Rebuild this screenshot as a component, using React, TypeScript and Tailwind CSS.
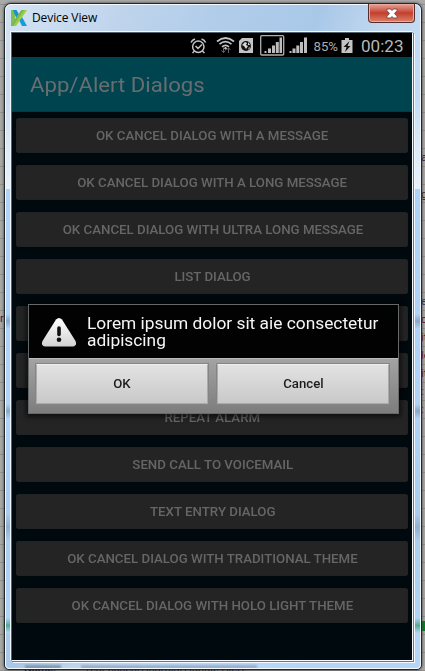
import React from "react";

const items = [
  "OK CANCEL DIALOG WITH A MESSAGE",
  "OK CANCEL DIALOG WITH A LONG MESSAGE",
  "OK CANCEL DIALOG WITH ULTRA LONG MESSAGE",
  "LIST DIALOG",
  "",
  "",
  "REPEAT ALARM",
  "SEND CALL TO VOICEMAIL",
  "TEXT ENTRY DIALOG",
  "OK CANCEL DIALOG WITH TRADITIONAL THEME",
  "OK CANCEL DIALOG WITH HOLO LIGHT THEME",
];

function Logo() {
  return (
    <svg className="h-4 w-4" viewBox="0 0 16 16">
      <path d="M0 0h4v16H0z" fill="#7fbf55" />
      <path d="M2 0h3.500L9 6l-3 4z" fill="#1593cf" />
      <path d="M8 10l3-3 5 9h-5z" fill="#159ddb" />
      <path d="M10.500 0H16L5 16H0v-1z" fill="#9fcb45" />
      <path d="M10.500 0H13L2 16H0v-1z" fill="#74b751" />
    </svg>
  );
}

function StatusIcons() {
  return (
    <svg className="h-6 w-[222px] shrink-0" viewBox="188 33 222 24">
      <g fill="none" stroke="#c4c4c4" strokeWidth="1.5">
        <circle cx="198.300" cy="46.700" r="5.700" />
        <path d="M191 42.500q1-2.500 4-3.500M205.600 42.500q-1-2.500-4-3.500M194.500 51l-2 2M202.500 51l2 2M195.500 46l2.500 2.500 4-4" />
        <path d="M217 41.500q8.500-7 17 0M219.500 44.200q6-5 12 0M222 46.800q3.500-3 7 0" strokeWidth="1.700" />
      </g>
      <circle cx="225.500" cy="48.200" r="1.200" fill="#c9c9c9" />
      <path d="M223.500 47.500v5M221.500 50.500l2 2.200 2-2.200M228.500 53v-5M226.500 50l2-2.200 2 2.200" fill="none" stroke="#666" />
      <path d="M242 38h11v15h-14V41z" fill="#c4c4c4" />
      <circle cx="246" cy="46" r="4.900" fill="#111" />
      <path d="M242 45l3-3 2 1-1 2 2 1-2 3-2-3zM248 42l2 3h-2zM249 47l1 1-2 2z" fill="#d7d7d7" />
      <rect x="260.700" y="35.700" width="23" height="19.300" rx="1" fill="none" stroke="#b0b0b0" strokeWidth="1.300" />
      <path d="M264.500 51h2v2h-2zM268 48.500h3V53h-3zM272 45.500h3V53h-3zM275.800 42h3v11h-3zM279.500 37.500h2.500V53h-2.500zM289.500 51h2v2h-2zM292.500 48.500h3V53h-3zM296.300 45.500h3V53h-3zM300 42h3v11h-3zM304 37.500h3V53h-3z" fill="#bdbdbd" />
      <text x="313.500" y="50.500" textLength="24.500" lengthAdjust="spacingAndGlyphs" fontSize="12" fontFamily="Roboto, sans-serif" fill="#adadad">85%</text>
      <path d="M345 38h4v2h3.500v13H341.500V40H345z" fill="#c4c4c4" />
      <path d="M349.500 41l-6 6h3l-1.500 5 5.500-6h-3z" fill="#111" />
      <text x="361" y="51.500" textLength="42.500" lengthAdjust="spacingAndGlyphs" fontSize="15.800" fontFamily="Roboto, sans-serif" fill="#b8b8b8">00:23</text>
    </svg>
  );
}

function AlertDialog() {
  const button =
    "flex h-[40px] w-[172px] items-center justify-center border border-[#aaa] border-t-[#eee] bg-linear-to-b from-[#e2e2e2] to-[#c9c9c9] pb-px text-[12px] font-medium text-[#1c1c1c] shadow-[0_0_0_1px_#858585]";
  return (
    <div className="absolute top-[271px] left-4 h-[110px] w-[371px] border border-[#656969] bg-[#838383] font-[Roboto,sans-serif] shadow-[0_1px_5px_2px_#0009]">
      <div className="flex h-[53px] items-start bg-[#020202] pt-2.5 pl-3">
        <svg className="mt-[3px] h-[29px] w-[36px] shrink-0" viewBox="0 0 36 29">
          <defs>
            <linearGradient id="warning" x2="0" y2="1">
              <stop stopColor="#fff" />
              <stop offset="1" stopColor="#d2d2d2" />
            </linearGradient>
          </defs>
          <path d="M15 1.600Q18-1.500 21 1.600L34.500 23q2 5-3 5.500h-27q-5-.5-3-5.500z" fill="url(#warning)" />
          <path d="M18 10v6.500" stroke="#111" strokeWidth="3.600" strokeLinecap="round" />
          <circle cx="18" cy="21.800" r="2.300" fill="#111" />
        </svg>
        <p className="ml-[10px] origin-left scale-x-[1.083] text-[16px] leading-[17px] whitespace-nowrap text-[#f5f5f5]">
          Lorem ipsum dolor sit aie consectetur<br />adipiscing
        </p>
      </div>
      <div className="flex h-[55px] gap-[9px] border-t border-[#bbb] bg-linear-to-b from-[#a3a3a3] to-[#7d7d7d] px-[7px] pt-[5px]">
        <button className={button}><span className="scale-x-[1.1]">OK</span></button>
        <button className={button}><span className="scale-x-[1.1]">Cancel</span></button>
      </div>
    </div>
  );
}

export default function App() {
  return (
    <div className="relative h-[671px] w-[425px] overflow-hidden bg-[#a9a8a5] bg-[repeating-linear-gradient(to_bottom,transparent_0px,transparent_4px,#929190_4px,#929190_5px,transparent_5px,transparent_18px)] px-1 pt-[3px] font-[Roboto,sans-serif]">
      <div className="absolute top-0 left-0 h-[3px] w-full bg-[#aaa]" />
      <span className="absolute top-[311px] left-0 h-4 w-1 overflow-hidden text-[11px] text-[#302052]">r</span>
      <span className="absolute top-[150px] left-[421px] text-[11px] text-[#302052]">a</span>
      <span className="absolute top-[187px] left-[421px] text-[11px] text-[#40291d]">g</span>
      <div className="absolute top-[293px] left-[421px] h-[126px] w-1 overflow-hidden text-[11px] leading-[18px] text-[#67103c]">
        <span className="text-[#1c3f75]">e</span><br />c<br />it<br />le<br />it<br />:<br />:
      </div>
      <div className="absolute top-[621px] left-[421px] h-[10px] w-1 bg-[#087f22]" />
      <div className="absolute top-[662px] left-[24px] flex text-[11px] leading-[14px] whitespace-nowrap text-[#171b35]">
        <b className="w-[60px]">Name:</b>
        <span>Test cases/Android/Handle Alert</span>
      </div>
      <div className="relative h-[667px] w-[418px] overflow-hidden rounded-t-[7px] rounded-b-[5px] border border-[#20272d] bg-[#b4d5f7] bg-[linear-gradient(115deg,#d4e3f3_0px,#bfd4ec_110px,#b2cdea_190px,#abc9e9_270px,#a9c8e8_290px,#c1d7ef_350px,#c3dcf6_410px,#b4d5f7_560px)] shadow-[0_0_3px_#333]">
        <div className="absolute top-[92px] left-0 h-[93px] w-full bg-linear-to-b from-[#e4eef900] via-[#dce9f7] to-[#e6f1fc]" />
        <div className="absolute top-[185px] left-0 h-[430px] w-full bg-[linear-gradient(to_bottom,#b0d3f7_0px,#b0d3f7_125px,#8ba8c5_132px,#b0d3f7_140px,#b0d3f7_215px,#8ba8c5_222px,#b0d3f7_230px,#aaccef_325px,#93afcc_338px,#acceef_352px,#b0d3f7_430px)]" />
        <div className="absolute top-[614px] left-0 h-[15px] w-full bg-linear-to-b from-[#b0d3f7] via-[#53aa8e] to-[#b4d5f7]" />
        <div className="absolute top-[661px] left-[20px] flex h-1 w-[232px] gap-5 blur-[1px]">
          <div className="w-9 bg-[#8298af]" />
          <div className="flex-1 bg-[#95afcc]" />
        </div>
        <div className="pointer-events-none absolute inset-0 rounded-t-[6px] rounded-b-[4px] border border-[#f4f9ff]" />
        <div className="relative flex h-7 items-start pl-1.5">
          <div className="mt-1.5"><Logo /></div>
          <span className="mt-[5px] ml-[5px] font-['Open_Sans',sans-serif] text-[12px] leading-[17px] tracking-[-0.100px] text-black">Device View</span>
          <button className="mr-[6px] ml-auto flex h-[19px] w-[47px] items-center justify-center rounded-b-[4px] border border-t-0 border-[#552d31] bg-linear-to-b from-[#e5a498] from-0% via-[#c13e2d] via-50% to-[#db8169] shadow-[inset_0_0_0_1px_#ecaaa0]">
            <svg className="h-[11px] w-3" viewBox="0 0 12 10">
              <path d="M1 .5h3.500L6 2 7.500.5H11v1.700L8.500 5 11 7.800v1.700H7.500L6 8 4.500 9.500H1V7.800L3.500 5 1 2.200z" fill="#fff" stroke="#653f47" strokeWidth=".8" />
            </svg>
          </button>
        </div>
        <div className="relative ml-[6px] h-[629px] w-[402px] border border-t-[#52616c] border-r-[#f2f8fd] border-b-[#f2f8fd] border-l-[#52616c] bg-[#00090d] shadow-[1px_1px_0_0_#67788c,2px_2px_0_0_#f2f8fd,-1px_-1px_0_0_#f2f8fd]">
          <div className="flex h-6 justify-end bg-black pr-0.5"><StatusIcons /></div>
          <header className="flex h-[55px] items-center border-b border-[#043a45] bg-[#004450] pt-0.5 pl-[18px]">
            <h1 className="origin-left scale-x-[1.107] text-[20px] text-[#686e70]">App/Alert Dialogs</h1>
          </header>
          <div className="flex flex-col gap-3 px-1 pt-1.5">
            {items.map((item, index) => (
              <button key={index} className="flex h-[35px] w-full shrink-0 items-center justify-center rounded-[2px] border border-[#202323] bg-[#242424] pl-px text-[12px] font-medium whitespace-nowrap text-[#666]">
                <span className="scale-x-[1.105]">{item}</span>
              </button>
            ))}
          </div>
          <AlertDialog />
        </div>
      </div>
    </div>
  );
}
